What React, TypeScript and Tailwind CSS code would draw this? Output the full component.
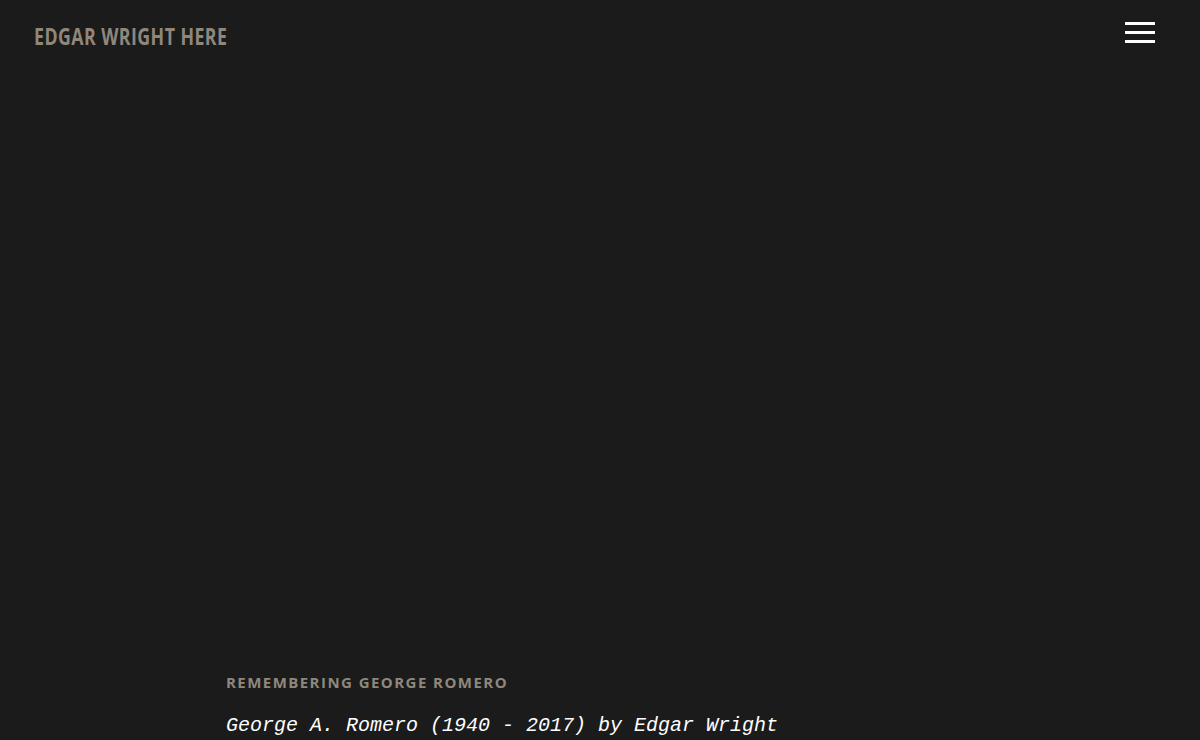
export default function App() {
  return (
    <div className="w-[1200px] h-[740px] bg-[#1b1b1b] overflow-hidden flex flex-col">
      <header className="flex items-start justify-between pl-[34px] pr-[45px] pt-[24px] h-[640px]">
        <div
          className="text-[#8f877c] text-[24px] leading-[24px] font-bold uppercase origin-left scale-x-[0.74] tracking-[0.6px] whitespace-nowrap"
          style={{ fontFamily: '"Open Sans", sans-serif' }}
        >
          Edgar Wright Here
        </div>
        <button className="flex flex-col gap-[6px] mt-[-2px] w-[30px]">
          <span className="block h-[3px] w-[30px] bg-white" />
          <span className="block h-[3px] w-[30px] bg-white" />
          <span className="block h-[3px] w-[30px] bg-white" />
        </button>
      </header>
      <main className="pl-[226px] pt-[33px]">
        <div
          className="text-[#8f877c] text-[15px] font-bold uppercase tracking-[1.45px] leading-[20px]"
          style={{ fontFamily: '"Open Sans", sans-serif' }}
        >
          Remembering George Romero
        </div>
        <div
          className="text-white text-[20px] italic mt-[20px] leading-[28px] whitespace-nowrap"
          style={{ fontFamily: '"Liberation Mono", monospace' }}
        >
          George A. Romero (1940 - 2017) by Edgar Wright
        </div>
      </main>
    </div>
  );
}
